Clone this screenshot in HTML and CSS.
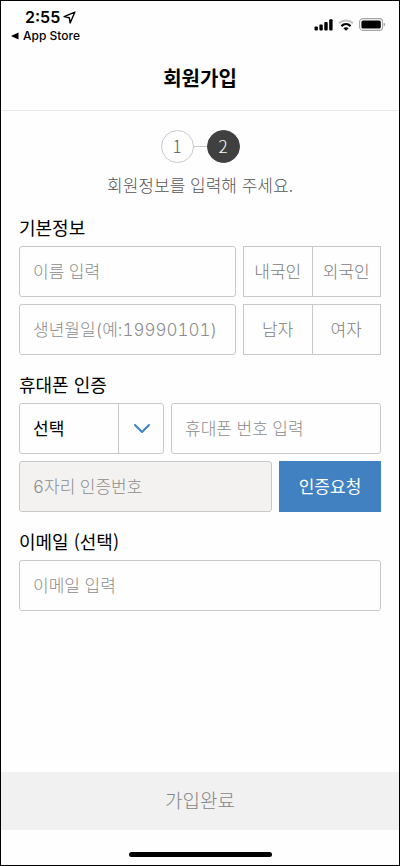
FILE: index.html
```html
<!DOCTYPE html>
<html lang="ko">
<head>
  <meta charset="UTF-8">
  <meta name="viewport" content="width=device-width, initial-scale=1.0">
  <title>회원가입</title>
  <link rel="stylesheet" href="styles.css">
</head>
<body>

  <div class="status-bar">
    <div class="status-left">
      <div class="clock">
        <span>2:55</span>
        <svg width="13" height="13" viewBox="0 0 12 12" aria-hidden="true">
          <path d="M11 1L1 5.2L5.8 6.2L6.6 11Z" fill="none" stroke="#000" stroke-width="1.3" stroke-linejoin="round"/>
        </svg>
      </div>
      <a class="back-app" href="#">
        <svg width="8" height="8" viewBox="0 0 8 8" aria-hidden="true">
          <path d="M0 4L7.5 0.4V7.6Z" fill="#000"/>
        </svg>
        <span>App Store</span>
      </a>
    </div>
    <div class="status-icons">
      <svg width="19" height="12" viewBox="0 0 19 12" aria-hidden="true">
        <rect x="0.5" y="7.5" width="3.4" height="4" rx="1"/>
        <rect x="5.4" y="5.5" width="3.4" height="6" rx="1"/>
        <rect x="10.3" y="3" width="3.4" height="8.5" rx="1"/>
        <rect x="15.2" y="0.3" width="3.4" height="11.2" rx="1"/>
      </svg>
      <svg width="16" height="12" viewBox="0 0 16 12" fill="none" aria-hidden="true">
        <path d="M1 4.4C5 0.4 11 0.4 15 4.4" stroke="#c4c4c4" stroke-width="2"/>
        <path d="M3.4 7.1C6.1 4.4 9.9 4.4 12.6 7.1" stroke="#000" stroke-width="2.2"/>
        <path d="M8 11.8L5.4 9.2C7 7.9 9 7.9 10.6 9.2Z" fill="#000"/>
      </svg>
      <svg width="27" height="13" viewBox="0 0 27 13" aria-hidden="true">
        <rect x="0.6" y="0.6" width="23" height="11.8" rx="3.4" fill="none" stroke="#a5a5a5" stroke-width="1.1"/>
        <rect x="2.4" y="2.4" width="19.4" height="8.2" rx="1.6"/>
        <path d="M24.8 4.4C26.6 5 26.6 8 24.8 8.6Z" fill="#a5a5a5"/>
      </svg>
    </div>
  </div>

  <header class="header">
    <h1>회원가입</h1>
  </header>

  <form class="join-form" id="joinForm">
    <ol class="steps">
      <li class="step">1</li>
      <li class="step active">2</li>
    </ol>
    <p class="guide">회원정보를 입력해 주세요.</p>

    <h2>기본정보</h2>
    <div class="rows">
      <div class="row">
        <input class="field" type="text" placeholder="이름 입력" aria-label="이름">
        <div class="choice" role="radiogroup" aria-label="국적">
          <label><input type="radio" name="nation"><span>내국인</span></label>
          <label><input type="radio" name="nation"><span>외국인</span></label>
        </div>
      </div>
      <div class="row">
        <input class="field" type="text" inputmode="numeric" placeholder="생년월일(예:19990101)" aria-label="생년월일">
        <div class="choice" role="radiogroup" aria-label="성별">
          <label><input type="radio" name="gender"><span>남자</span></label>
          <label><input type="radio" name="gender"><span>여자</span></label>
        </div>
      </div>
    </div>

    <h2>휴대폰 인증</h2>
    <div class="rows">
      <div class="row">
        <div class="select-box">
          <select aria-label="통신사">
            <option>선택</option>
          </select>
          <span class="arrow">
            <svg width="18" height="12" viewBox="0 0 18 12" fill="none" aria-hidden="true">
              <path d="M2 2L9 9L16 2" stroke="#3f80c1" stroke-width="2" stroke-linecap="round" stroke-linejoin="round"/>
            </svg>
          </span>
        </div>
        <input class="field" type="tel" placeholder="휴대폰 번호 입력" aria-label="휴대폰 번호">
      </div>
      <div class="row">
        <input class="field" type="text" placeholder="6자리 인증번호" aria-label="인증번호" disabled>
        <button class="btn-request" type="button">인증요청</button>
      </div>
    </div>

    <h2><label for="email">이메일 (선택)</label></h2>
    <div class="row">
      <input class="field" type="email" id="email" placeholder="이메일 입력">
    </div>
  </form>

  <footer class="footer">
    <button class="btn-submit" type="submit" form="joinForm" disabled>가입완료</button>
    <div class="home-bar"></div>
  </footer>

</body>
</html>
```

FILE: styles.css
```css
* {
  box-sizing: border-box;
}

body {
  display: flex;
  flex-direction: column;
  min-height: 100vh;
  margin: 0;
  border: 1px solid #000;
  background-color: #fefefe;
  color: #111;
  font-family: 'Noto Sans CJK KR', sans-serif;
  font-size: 17px;
}

input, select, button {
  font-family: inherit;
  font-size: 17px;
  font-weight: 300;
}

/* status bar */
.status-bar {
  display: flex;
  justify-content: space-between;
  padding: 6px 13px 0 10px;
  color: #000;
  font-family: Inter, sans-serif;
}

.clock {
  display: flex;
  align-items: center;
  gap: 3px;
  padding-left: 14px;
  font-size: 16px;
  font-weight: 600;
  line-height: 20px;
}

.back-app {
  display: flex;
  align-items: center;
  gap: 4px;
  color: #000;
  font-size: 12px;
  font-weight: 500;
  line-height: 18px;
  text-decoration: none;
}

.status-icons {
  display: flex;
  align-items: center;
  gap: 5px;
  height: 35px;
}

/* header */
.header {
  padding: 16px 0;
  border-bottom: 1px solid #e6e6e6;
  text-align: center;
}

h1 {
  margin: 0;
  color: #000;
  font-size: 20px;
  font-weight: 700;
  line-height: 33px;
}

/* form */
.join-form {
  padding: 19px 18px 24px;
}

.steps {
  display: flex;
  justify-content: center;
  margin: 0;
  padding: 0;
  list-style: none;
}

.step {
  display: flex;
  align-items: center;
  justify-content: center;
  width: 33px;
  height: 33px;
  padding-bottom: 2px;
  border: 1px solid #c8c8c8;
  border-radius: 50%;
  color: #555;
  font-weight: 300;
}

.step.active {
  order: 2;
  border-color: #404040;
  background-color: #404040;
  color: #fff;
}

/* line between the two circles */
.steps::before {
  content: '';
  order: 1;
  width: 13px;
  height: 1px;
  margin-top: 16px;
  background-color: #c8c8c8;
}

.guide {
  margin: 9px 0 0;
  color: #555;
  font-weight: 300;
  line-height: 26px;
  text-align: center;
}

h2 {
  margin: 0;
  padding: 18px 0 8px;
  color: #000;
  font-size: 18px;
  font-weight: 400;
  line-height: 22px;
}

.rows {
  display: flex;
  flex-direction: column;
  gap: 7px;
}

.row {
  display: flex;
  gap: 7px;
  height: 51px;
}

.field {
  flex: 1;
  min-width: 0;
  padding: 0 13px;
  border: 1px solid #c8c8c8;
  border-radius: 3px;
  background-color: #fefefe;
  font-family: Inter, 'Noto Sans CJK KR', sans-serif;
  font-variant-numeric: tabular-nums;
}

.field::placeholder {
  color: #8c8c8c;
  opacity: 1;
}

.field:disabled {
  background-color: #f3f2f1;
}

.choice {
  display: flex;
  width: 138px;
  border: 1px solid #c8c8c8;
}

.choice label {
  display: flex;
  flex: 1;
  align-items: center;
  justify-content: center;
  padding-bottom: 2px;
  color: #7c7c7c;
  font-weight: 300;
  cursor: pointer;
}

.choice label + label {
  border-left: 1px solid #c8c8c8;
}

.choice input {
  position: absolute;
  opacity: 0;
}

.choice input:checked + span {
  color: #3f80c1;
}

.select-box {
  position: relative;
  width: 145px;
}

.select-box select {
  width: 100%;
  height: 100%;
  padding: 0 58px 2px 13px;
  border: 1px solid #c8c8c8;
  border-radius: 3px;
  background-color: #fefefe;
  color: #000;
  font-weight: 400;
  appearance: none;
}

.arrow {
  position: absolute;
  top: 0;
  right: 0;
  display: flex;
  align-items: center;
  justify-content: center;
  width: 46px;
  height: 100%;
  border-left: 1px solid #c8c8c8;
  pointer-events: none;
}

.btn-request {
  width: 102px;
  padding: 0 0 2px;
  border: none;
  background-color: #4181c1;
  color: #fff;
  font-weight: 400;
  cursor: pointer;
}

/* footer */
.footer {
  margin-top: auto;
}

.btn-submit {
  display: block;
  width: 100%;
  height: 58px;
  padding: 0 0 4px;
  border: none;
  background-color: #f1f1f1;
  color: #858585;
  font-size: 19px;
}

.home-bar {
  width: 143px;
  height: 5px;
  margin: 22px auto 8px;
  border-radius: 3px;
  background-color: #000;
}
```
